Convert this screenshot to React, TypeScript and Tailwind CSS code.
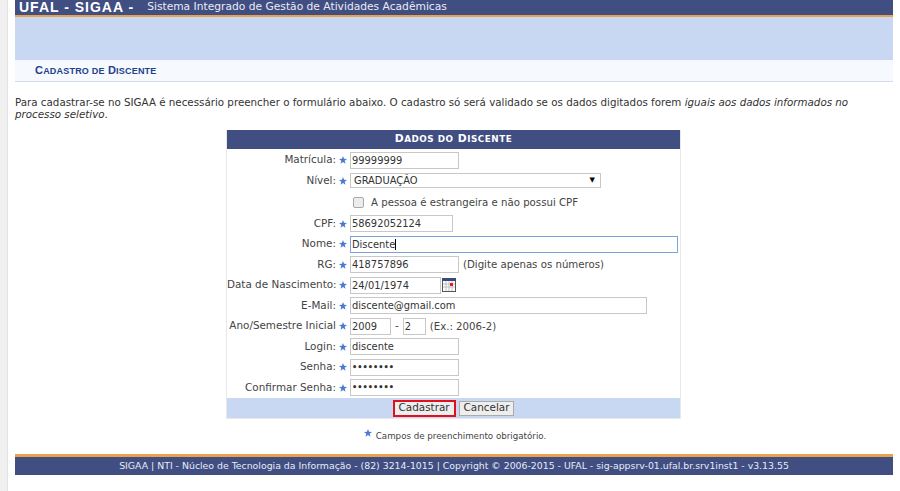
import React from 'react';

const Star = () => (
  <svg viewBox="0 0 10 10" className="w-[8px] h-[8px] shrink-0">
    <path d="M5 0 L6.3 3.4 L10 3.7 L7.1 6 L8.1 9.7 L5 7.6 L1.9 9.7 L2.9 6 L0 3.7 L3.7 3.4 Z" fill="#4a7bd0" />
  </svg>
);

const inputCls = "h-[17px] border border-[#c8c8c8] bg-white px-[1px] leading-[15px] text-[#333] flex items-center shrink-0";

const Row = ({ label, children }: { label: string; children: React.ReactNode }) => (
  <div className="h-[20.5px] flex items-center">
    <div className="w-[109px] text-right text-[10.4px] text-[#444] whitespace-nowrap">{label}</div>
    <div className="w-[14px] flex justify-center pr-[1px]"><Star /></div>
    <div className="flex items-center">{children}</div>
  </div>
);

const Field = ({ w, value }: { w: string; value: string }) => (
  <div className={`${inputCls} ${w} text-[9.9px]`}>{value}</div>
);

const Password = () => (
  <div className={`${inputCls} w-[109px] text-[8.2px] font-bold text-[#222]`}>••••••••</div>
);

const CalendarIcon = () => (
  <svg viewBox="0 0 14 14" className="w-[14px] h-[14px] ml-[1px]">
    <rect x="0.5" y="0.5" width="13" height="13" fill="#fff" stroke="#555" />
    <rect x="0" y="0" width="14" height="3" fill="#3a4a78" />
    <path d="M1 6h12M1 9h12M4 3v10M7 3v10M10 3v10" stroke="#aaa" strokeWidth="0.7" />
    <rect x="8" y="5" width="3" height="3" fill="#e02020" />
  </svg>
);

export default function App() {
  return (
    <div className="w-[900px] h-[491px] overflow-hidden bg-white flex font-['DejaVu_Sans',sans-serif]">
      <div className="w-[8px] h-full bg-[#f0f0f0] border-r border-[#e2e2e2] shrink-0" />
      <div className="ml-[7px] w-[878px] flex flex-col">
        <div className="h-[15px] bg-[#404e82] text-white flex items-center whitespace-nowrap">
          <span className="ml-[4px] font-['Liberation_Sans',sans-serif] font-bold text-[14px] tracking-[1px]">UFAL - SIGAA -</span>
          <span className="ml-[13px] text-[10.7px] text-[#e8ecf6]">Sistema Integrado de Gestão de Atividades Acadêmicas</span>
        </div>
        <div className="h-[2px] bg-[#e6a24c]" />
        <div className="h-[43px] bg-[#c9d8f2]" />
        <div className="h-[22px] bg-[#f6f9fd] border-b border-[#d4dcec] flex items-center pl-[20px] font-bold text-[#22408c] text-[11px] font-['Liberation_Sans',sans-serif] tracking-[0.2px]">
          <span>C<span className="text-[9px]">ADASTRO DE</span> D<span className="text-[9px]">ISCENTE</span></span>
        </div>
        <p className="mt-[14px] text-[10.3px] leading-[12px] text-[#333] whitespace-nowrap">
          Para cadastrar-se no SIGAA é necessário preencher o formulário abaixo. O cadastro só será validado se os dados digitados forem <i>iguais aos dados informados no</i>
          <br />
          <i>processo seletivo</i>.
        </p>

        <div className="mt-[10px] ml-[211px] w-[455px] border-r border-[#e8e8e8] border-l border-b flex flex-col">
          <div className="h-[19px] bg-[#404e82] flex items-center justify-center text-white font-bold text-[10.8px] tracking-[0.5px]">
            <span>D<span className="text-[8.8px]">ADOS DO</span> D<span className="text-[8.8px]">ISCENTE</span></span>
          </div>
          <div className="pt-[1px]">
            <Row label="Matrícula:"><Field w="w-[109px]" value="99999999" /></Row>
            <Row label="Nível:">
              <div className={`${inputCls} w-[251px] !h-[15px] justify-between pl-[3px] pr-[5px] border-[#b4b4b4] text-[9.9px]`}>
                <span>GRADUAÇÃO</span>
                <span className="text-[7px] text-black">▼</span>
              </div>
            </Row>
            <div className="h-[22.5px] flex items-center pl-[126px] text-[10.2px] text-[#444]">
              <span className="w-[11px] h-[11px] rounded-[2px] border border-[#aaa] bg-[#ececec] mr-[7px]" />
              A pessoa é estrangeira e não possui CPF
            </div>
            <Row label="CPF:"><Field w="w-[103px]" value="58692052124" /></Row>
            <Row label="Nome:">
              <div className={`${inputCls} w-[328px] !border-[#7da2d8] text-[9.9px]`}>
                Discente<span className="w-[1px] h-[11px] bg-black" />
              </div>
            </Row>
            <Row label="RG:">
              <Field w="w-[109px]" value="418757896" />
              <span className="ml-[4px] text-[10.2px] text-[#444]">(Digite apenas os números)</span>
            </Row>
            <Row label="Data de Nascimento:">
              <Field w="w-[91px]" value="24/01/1974" />
              <CalendarIcon />
            </Row>
            <Row label="E-Mail:"><Field w="w-[297px]" value="discente@gmail.com" /></Row>
            <Row label="Ano/Semestre Inicial">
              <Field w="w-[41px]" value="2009" />
              <span className="mx-[4px] text-[10.4px] text-[#444]">-</span>
              <Field w="w-[23px]" value="2" />
              <span className="ml-[4px] text-[10.2px] text-[#444]">(Ex.: 2006-2)</span>
            </Row>
            <Row label="Login:"><Field w="w-[109px]" value="discente" /></Row>
            <Row label="Senha:"><Password /></Row>
            <Row label="Confirmar Senha:"><Password /></Row>
          </div>
          <div className="h-[20px] bg-[#c9d8f2] flex items-center justify-center gap-[3px]">
            <div className="h-[17px] px-[4px] border-2 border-[#e0101c] bg-[#eee] text-[10.4px] text-[#333] flex items-center">Cadastrar</div>
            <div className="h-[15px] px-[4px] border border-[#aaa] bg-[#eee] text-[10.4px] text-[#333] flex items-center">Cancelar</div>
          </div>
        </div>

        <div className="mt-[11px] flex justify-center items-start gap-[4px] text-[8.7px] text-[#444] leading-[12px] pl-[2px]">
          <span className="mt-[-1px]"><Star /></span>
          <span>Campos de preenchimento obrigatório.</span>
        </div>

        <div className="mt-[12px] h-[3px] bg-[#e6a24c]" />
        <div className="h-[18px] bg-[#404e82] text-[#e8ecf6] text-[9.35px] flex items-center justify-center whitespace-nowrap">
          SIGAA | NTI - Núcleo de Tecnologia da Informação - (82) 3214-1015 | Copyright © 2006-2015 - UFAL - sig-appsrv-01.ufal.br.srv1inst1 - v3.13.55
        </div>
      </div>
    </div>
  );
}
